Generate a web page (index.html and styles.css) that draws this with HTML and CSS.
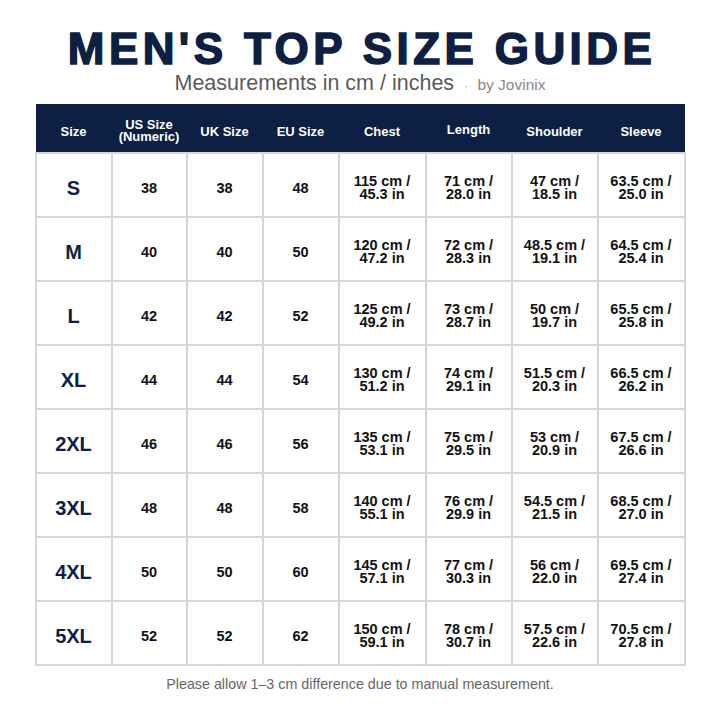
FILE: index.html
```html
<!DOCTYPE html>
<html>
<head>
<meta charset="utf-8">
<link rel="stylesheet" href="styles.css">
</head>
<body>
<div class="page">
  <h1 class="title">MEN'S TOP SIZE GUIDE</h1>
  <div class="subtitle"><span class="sub-main">Measurements in cm / inches</span><span class="dot">·</span><span class="by">by Jovinix</span></div>
  <table class="chart">
    <colgroup>
      <col class="c1"><col class="c2"><col class="c3"><col class="c4"><col class="c5"><col class="c6"><col class="c7"><col class="c8">
    </colgroup>
    <thead>
      <tr><th>Size</th><th class="two">US Size<br>(Numeric)</th><th>UK Size</th><th>EU Size</th><th>Chest</th><th class="up">Length</th><th>Shoulder</th><th>Sleeve</th></tr>
    </thead>
    <tbody>
      <tr><td class="sz">S</td><td>38</td><td>38</td><td>48</td><td class="m">115 cm /<br>45.3 in</td><td class="m">71 cm /<br>28.0 in</td><td class="m">47 cm /<br>18.5 in</td><td class="m">63.5 cm /<br>25.0 in</td></tr>
      <tr><td class="sz">M</td><td>40</td><td>40</td><td>50</td><td class="m">120 cm /<br>47.2 in</td><td class="m">72 cm /<br>28.3 in</td><td class="m">48.5 cm /<br>19.1 in</td><td class="m">64.5 cm /<br>25.4 in</td></tr>
      <tr><td class="sz">L</td><td>42</td><td>42</td><td>52</td><td class="m">125 cm /<br>49.2 in</td><td class="m">73 cm /<br>28.7 in</td><td class="m">50 cm /<br>19.7 in</td><td class="m">65.5 cm /<br>25.8 in</td></tr>
      <tr><td class="sz">XL</td><td>44</td><td>44</td><td>54</td><td class="m">130 cm /<br>51.2 in</td><td class="m">74 cm /<br>29.1 in</td><td class="m">51.5 cm /<br>20.3 in</td><td class="m">66.5 cm /<br>26.2 in</td></tr>
      <tr><td class="sz">2XL</td><td>46</td><td>46</td><td>56</td><td class="m">135 cm /<br>53.1 in</td><td class="m">75 cm /<br>29.5 in</td><td class="m">53 cm /<br>20.9 in</td><td class="m">67.5 cm /<br>26.6 in</td></tr>
      <tr><td class="sz">3XL</td><td>48</td><td>48</td><td>58</td><td class="m">140 cm /<br>55.1 in</td><td class="m">76 cm /<br>29.9 in</td><td class="m">54.5 cm /<br>21.5 in</td><td class="m">68.5 cm /<br>27.0 in</td></tr>
      <tr><td class="sz">4XL</td><td>50</td><td>50</td><td>60</td><td class="m">145 cm /<br>57.1 in</td><td class="m">77 cm /<br>30.3 in</td><td class="m">56 cm /<br>22.0 in</td><td class="m">69.5 cm /<br>27.4 in</td></tr>
      <tr><td class="sz">5XL</td><td>52</td><td>52</td><td>62</td><td class="m">150 cm /<br>59.1 in</td><td class="m">78 cm /<br>30.7 in</td><td class="m">57.5 cm /<br>22.6 in</td><td class="m">70.5 cm /<br>27.8 in</td></tr>
    </tbody>
  </table>
  <p class="note">Please allow 1–3 cm difference due to manual measurement.</p>
</div>
</body>
</html>
```
FILE: styles.css
```css
html, body {
  margin: 0;
  padding: 0;
  background: #ffffff;
}
.page {
  width: 720px;
  height: 720px;
  padding-top: 27px;
  box-sizing: border-box;
  display: flex;
  flex-direction: column;
  align-items: center;
  font-family: "Liberation Sans", Arial, sans-serif;
}
.title {
  margin: 0;
  font-family: "Liberation Sans", Arial, sans-serif;
  font-weight: 700;
  font-size: 44px;
  line-height: 44px;
  letter-spacing: 4.4px;
  padding-left: 4px;
  color: #0d1f42;
  -webkit-text-stroke: 1.5px #0d1f42;
  white-space: nowrap;
}
.subtitle {
  margin-top: 0px;
  display: flex;
  align-items: baseline;
  height: 27px;
}
.sub-main {
  font-size: 21.5px;
  color: #5a5a5a;
}
.dot {
  font-size: 13px;
  color: #aaaaaa;
  margin: 0 9px 0 10px;
}
.by {
  font-size: 15.5px;
  color: #888888;
}
.chart {
  margin-top: 6px;
  border-collapse: collapse;
  table-layout: fixed;
  width: 649px;
  font-family: "Liberation Sans", Arial, sans-serif;
}
.c1 { width: 76px; }
.c2 { width: 75px; }
.c3 { width: 76px; }
.c4 { width: 76px; }
.c5 { width: 87px; }
.c6 { width: 86px; }
.c7 { width: 86px; }
.c8 { width: 87px; }
.chart th {
  background: #0d1f42;
  color: #ffffff;
  font-weight: 700;
  font-size: 13px;
  height: 49px;
  padding: 6px 0 0 0;
  box-sizing: border-box;
  text-align: center;
  vertical-align: middle;
}
.chart th.two {
  line-height: 12px;
}
.chart th.up {
  padding-top: 3px;
}
.chart td {
  height: 64px;
  padding: 6px 0 0 0;
  box-sizing: border-box;
  border: 2px solid #d6d6d6;
  text-align: center;
  vertical-align: middle;
  font-weight: 700;
  font-size: 14.5px;
  color: #111111;
}
.chart td.m {
  line-height: 13px;
  font-size: 14.5px;
  padding-top: 6px;
}
.chart td.sz {
  font-size: 20px;
  color: #0d1f42;
}
.note {
  margin: 10px 0 0 0;
  font-size: 14.3px;
  color: #666666;
}
```
